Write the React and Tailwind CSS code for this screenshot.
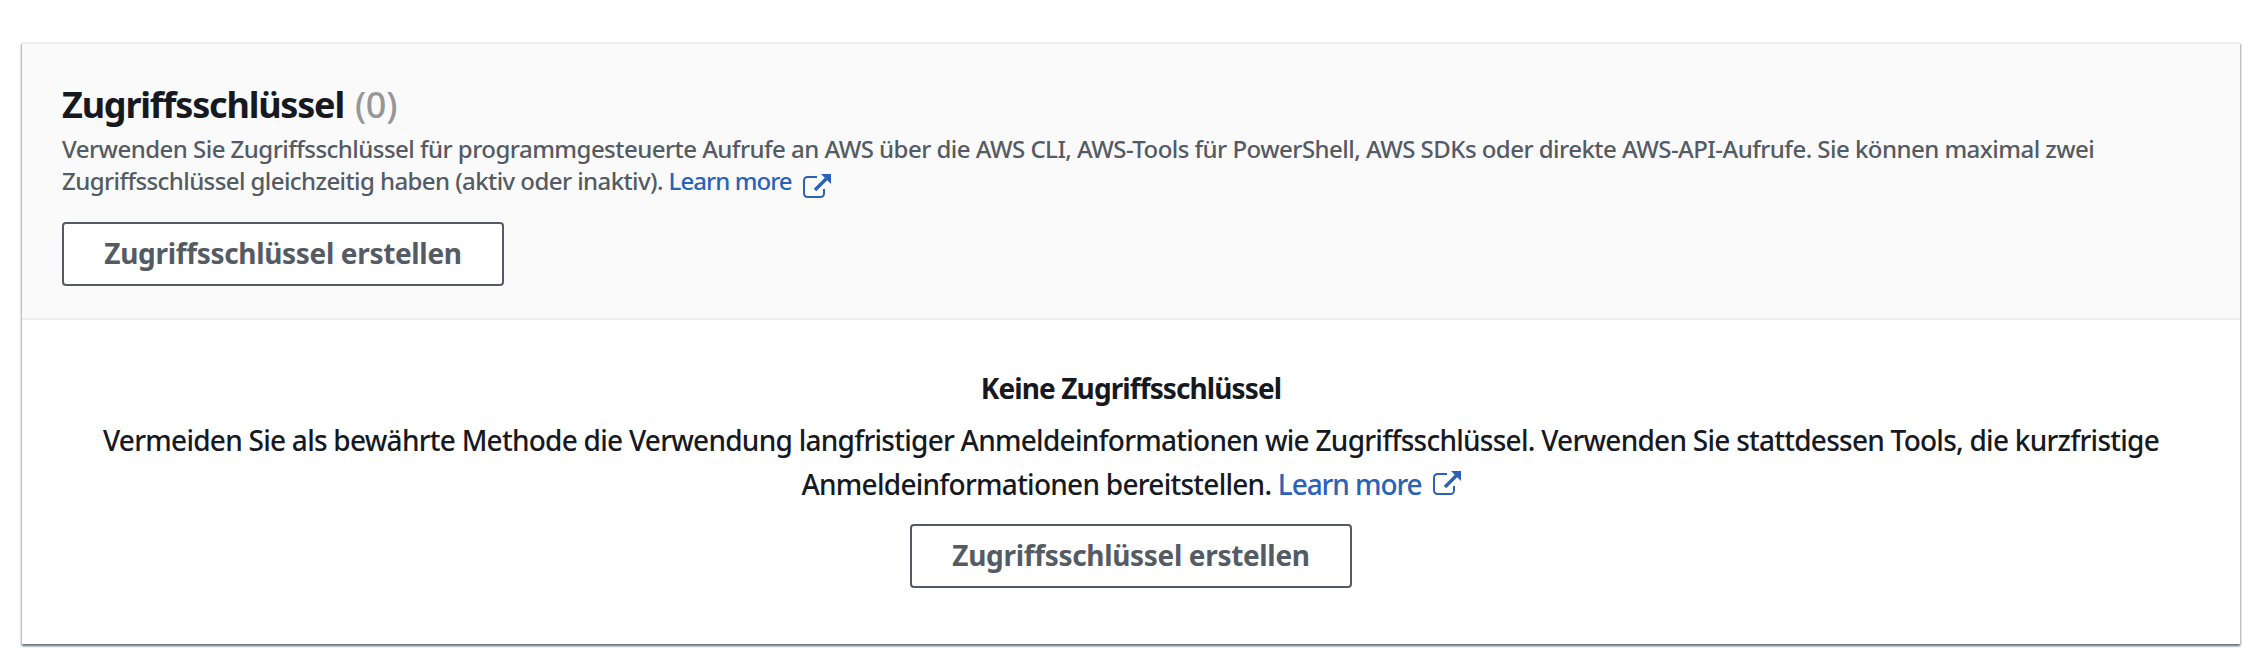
import React from 'react';

function ExternalIcon({ className }) {
  return (
    <svg viewBox="0 0 28 25" className={`inline-block h-[25px] w-7 ${className}`} fill="none" stroke="currentColor" aria-hidden="true">
      <path d="M14 3H4.5A3.5 3.5 0 0 0 1 6.5v13A3.5 3.5 0 0 0 4.5 23h13a3.5 3.5 0 0 0 3.5-3.5V15" strokeWidth="2" />
      <path d="M12 16 23.5 4.5" strokeWidth="3.4" />
      <path d="M18 0h10v10z" fill="currentColor" stroke="none" />
    </svg>
  );
}

function CreateButton() {
  return (
    <button
      type="button"
      className="flex h-16 w-[442px] items-center justify-center rounded-[4px] border-2 border-[#545b64] bg-white pb-0.5 text-[28px] leading-[44px] font-bold tracking-[-0.33px] whitespace-nowrap text-[#545b64]"
    >
      Zugriffsschlüssel erstellen
    </button>
  );
}

export default function App() {
  return (
    <main className="h-[662px] bg-white px-[22px] pt-[42px] pr-4 font-['Noto_Sans',sans-serif] font-medium text-[#16191f]">
      <section className="flex h-[602px] flex-col border-t-2 border-[#eaeded] bg-white shadow-[0_2px_2px_0_rgba(0,28,36,0.3),1px_2px_2px_0_rgba(0,28,36,0.25),-1px_2px_2px_0_rgba(0,28,36,0.25)]">
        <header className="flex h-[276px] flex-col border-b-2 border-[#eaeded] bg-[#fafafa] pt-[39px] pl-10">
          <h2 className="flex h-11 items-center gap-[11px] text-[36px] leading-[44px]">
            <span className="font-bold tracking-[-1.2px]">Zugriffsschlüssel</span>
            <span className="tracking-[-0.3px] text-[#979797]">(0)</span>
          </h2>
          <p className="mt-1.5 h-16 text-[24px] leading-8 whitespace-nowrap text-[#545b64]">
            <span className="tracking-[-0.533px]">
              Verwenden Sie Zugriffsschlüssel für programmgesteuerte Aufrufe an AWS über die AWS CLI, AWS-Tools für PowerShell, AWS SDKs oder direkte AWS-API-Aufrufe. Sie können maximal zwei
            </span>
            <br />
            <span className="tracking-[-0.58px]">Zugriffsschlüssel gleichzeitig haben (aktiv oder inaktiv). </span>
            <a className="tracking-[-0.95px] text-[#2a62ba]">
              Learn more
              <ExternalIcon className="ml-[11px] align-[-9px]" />
            </a>
          </p>
          <div className="mt-[25px]">
            <CreateButton />
          </div>
        </header>
        <div className="flex flex-1 flex-col items-center pt-[46px] text-[28px] leading-[44px]">
          <h3 className="font-bold tracking-[-0.9px]">Keine Zugriffsschlüssel</h3>
          <p className="mt-2 h-[88px] text-center whitespace-nowrap">
            <span className="tracking-[-0.742px]">
              Vermeiden Sie als bewährte Methode die Verwendung langfristiger Anmeldeinformationen wie Zugriffsschlüssel. Verwenden Sie stattdessen Tools, die kurzfristige
            </span>
            <br />
            <span className="tracking-[-0.74px]">Anmeldeinformationen bereitstellen. </span>
            <a className="tracking-[-1.1px] text-[#2a62ba]">
              Learn more
              <ExternalIcon className="ml-[11px] align-[-1px]" />
            </a>
          </p>
          <div className="mt-[18px]">
            <CreateButton />
          </div>
        </div>
      </section>
    </main>
  );
}
